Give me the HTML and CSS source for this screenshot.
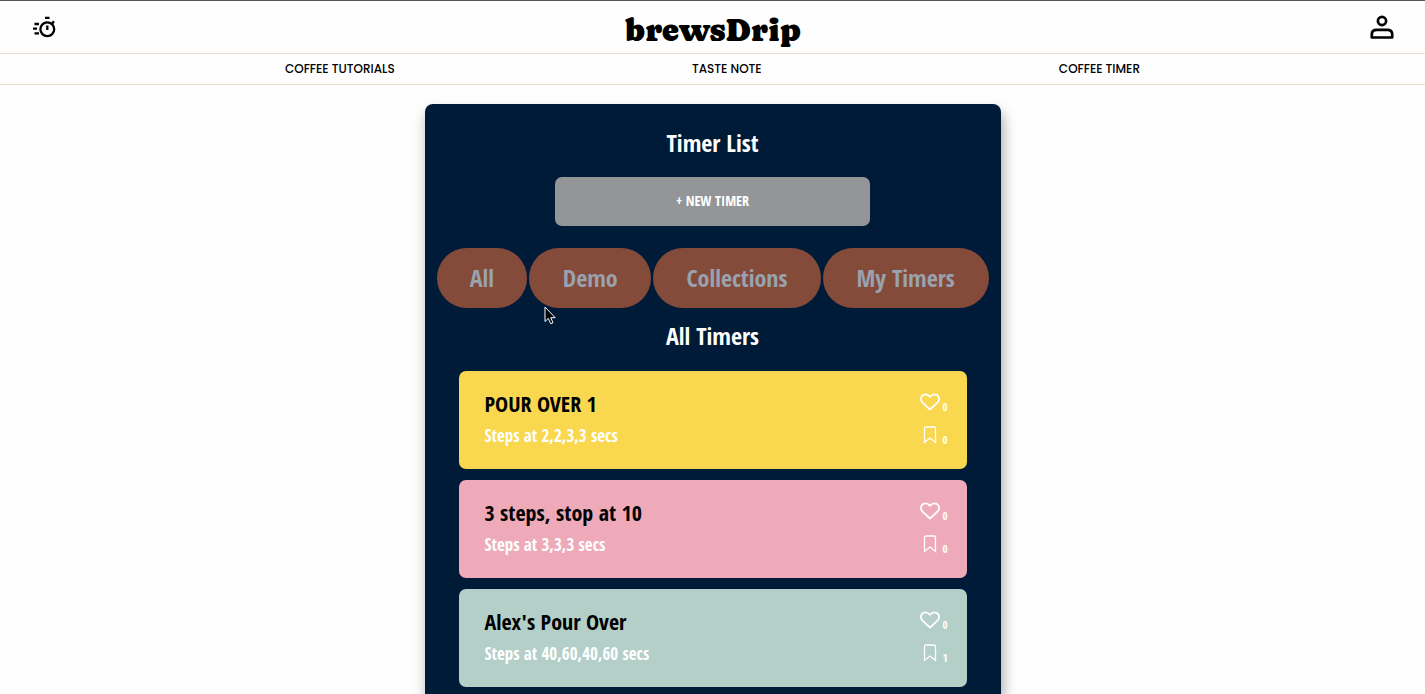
FILE: index.html
```html
<!DOCTYPE html>
<html lang="en">
<head>
<meta charset="utf-8">
<title>brewsDrip</title>
<link rel="stylesheet" href="styles.css">
</head>
<body>
<header class="header">
  <a class="icon-link" href="#timer" aria-label="Timer">
    <svg width="24" height="24" viewBox="0 0 24 24" fill="none" stroke="#000" stroke-width="2.300">
      <circle cx="15.300" cy="14.200" r="6.900"/>
      <path d="M13 2.800h4.500M15.300 10.500v4.500M20 8.700l2-2.500M2.500 9h4.500M1 13.700h4M2.500 18.400h4.500"/>
    </svg>
  </a>
  <a class="logo" href="#home">brewsDrip</a>
  <a class="icon-link" href="#account" aria-label="Account">
    <svg width="24" height="24" viewBox="0 0 24 24" fill="none" stroke="#000" stroke-width="2.700">
      <circle cx="12" cy="6" r="4.100"/>
      <path d="M1.800 22.500v-3.400q0-4.300 4.800-4.300h10.800q4.800 0 4.800 4.300v3.400z" stroke-linejoin="round"/>
    </svg>
  </a>
</header>
<nav class="nav">
  <a href="#tutorials">COFFEE TUTORIALS</a>
  <a href="#taste">TASTE NOTE</a>
  <a href="#timers">COFFEE TIMER</a>
</nav>
<main class="panel">
  <h1 class="heading">Timer List</h1>
  <button class="new-timer" type="button">+ NEW TIMER</button>
  <div class="filters">
    <button class="filter" type="button">All</button>
    <button class="filter" type="button">Demo</button>
    <button class="filter" type="button">Collections</button>
    <button class="filter" type="button">My Timers</button>
    <svg class="pointer" width="12" height="19" viewBox="0 0 12 19"><path d="M1 1v14.500l3.300-3.100 2.400 5.300 2.300-1-2.300-5h4.500z" fill="#000" stroke="#fff"/></svg>
  </div>
  <h2 class="heading">All Timers</h2>
  <svg class="symbols" aria-hidden="true">
    <symbol id="heart" viewBox="0 0 20 18"><path d="M10 16.500L2.300 9.300C-.8 5.600 2 1.300 5.500 1.300c2 0 3.400 1 4.500 2.500 1.100-1.500 2.500-2.500 4.500-2.500 3.500 0 6.300 4.300 3.200 8z" fill="none" stroke="#fff" stroke-width="1.800" stroke-linejoin="round"/></symbol>
    <symbol id="mark" viewBox="0 0 20 18"><path d="M4.500 16.500V2.500q0-1.500 1.500-1.500h8q1.500 0 1.500 1.500v14L10 12z" fill="none" stroke="#fff" stroke-width="1.300"/></symbol>
  </svg>
  <ul class="timers">
    <li class="timer yellow">
      <div><h3 class="name">POUR OVER 1</h3><p class="steps">Steps at 2,2,3,3 secs</p></div>
      <div class="actions">
        <button class="action" type="button" aria-label="Like"><svg width="20" height="18"><use href="#heart"/></svg><span>0</span></button>
        <button class="action" type="button" aria-label="Save"><svg width="20" height="18"><use href="#mark"/></svg><span>0</span></button>
      </div>
    </li>
    <li class="timer pink">
      <div><h3 class="name">3 steps, stop at 10</h3><p class="steps">Steps at 3,3,3 secs</p></div>
      <div class="actions">
        <button class="action" type="button" aria-label="Like"><svg width="20" height="18"><use href="#heart"/></svg><span>0</span></button>
        <button class="action" type="button" aria-label="Save"><svg width="20" height="18"><use href="#mark"/></svg><span>0</span></button>
      </div>
    </li>
    <li class="timer green">
      <div><h3 class="name">Alex's Pour Over</h3><p class="steps">Steps at 40,60,40,60 secs</p></div>
      <div class="actions">
        <button class="action" type="button" aria-label="Like"><svg width="20" height="18"><use href="#heart"/></svg><span>0</span></button>
        <button class="action" type="button" aria-label="Save"><svg width="20" height="18"><use href="#mark"/></svg><span>1</span></button>
      </div>
    </li>
  </ul>
</main>
</body>
</html>
```
FILE: styles.css
```css
* { box-sizing: border-box; }
html { background: #fefefe; }
body {
  margin: 0;
  min-height: 100vh;
  display: flex;
  flex-direction: column;
  font-family: "Open Sans Condensed", "Noto Sans Condensed", "Liberation Sans Narrow", "Open Sans", sans-serif;
}
h1, h2, h3, p, ul { margin: 0; padding: 0; }
a { color: #000; text-decoration: none; }
button { border: 0; font-family: inherit; cursor: pointer; }
.header {
  display: flex;
  justify-content: space-between;
  align-items: center;
  height: 54px;
  padding: 0 31px 0 32px;
  border-top: 1px solid #58585a;
  border-bottom: 1px solid #e8ddd0;
}
.icon-link { display: flex; }
.logo {
  padding-top: 6px;
  font: 400 32px/36px "Caprasimo", "Chonburi", "DejaVu Serif Condensed", serif;
}
.nav {
  display: flex;
  justify-content: space-between;
  align-items: center;
  height: 31px;
  padding: 0 20%;
  border-bottom: 1px solid #e8ddd0;
  font: 500 12px/18px "Poppins", "Lato", sans-serif;
}
.panel {
  flex: 1;
  display: flex;
  flex-direction: column;
  align-items: center;
  width: 100%;
  max-width: 576px;
  margin: 19px auto 0;
  padding: 22px 12px 8px;
  border-radius: 8px 8px 0 0;
  background: #001b38;
  box-shadow: 2px 8px 14px rgba(0, 0, 0, .35);
}
.heading { color: #fff; font-size: 24px; line-height: 34px; font-weight: 700; }
.new-timer {
  width: 315px;
  max-width: 100%;
  height: 49px;
  margin: 17px 0 22px;
  padding-bottom: 4px;
  border-radius: 7px;
  background: #949596;
  color: #fff;
  font-size: 14px;
  font-weight: 700;
}
.filters {
  position: relative;
  display: grid;
  grid-template-columns: 91fr 122fr 168fr 166fr;
  gap: 2px;
  width: 100%;
  margin-bottom: 11px;
}
.filter {
  height: 60px;
  padding: 0 0 2px;
  border-radius: 30px;
  background: #854b3a;
  color: #99a2af;
  font-size: 24px;
  font-weight: 700;
}
.pointer { position: absolute; left: 107px; top: 58px; }
.symbols { display: none; }
.timers {
  display: grid;
  gap: 11px;
  width: 100%;
  margin-top: 18px;
  padding: 0 22px;
  list-style: none;
}
.timer {
  display: flex;
  justify-content: space-between;
  min-height: 98px;
  padding: 15px 19px 0 26px;
  border-radius: 7px;
}
.yellow { background: #f9d74e; }
.pink { background: #eeaab9; }
.green { background: #b4cec8; }
.name { font-size: 22px; line-height: 34px; font-weight: 700; }
.steps { color: #fff; font-size: 17px; line-height: 32px; font-weight: 700; }
.actions { display: grid; gap: 11px; align-content: start; padding-top: 7px; }
.action {
  display: flex;
  gap: 2px;
  height: 22px;
  padding: 0;
  background: none;
  color: #fff;
  font-size: 11px;
  font-weight: 300;
  line-height: 16px;
}
.action span { align-self: flex-end; }
```
